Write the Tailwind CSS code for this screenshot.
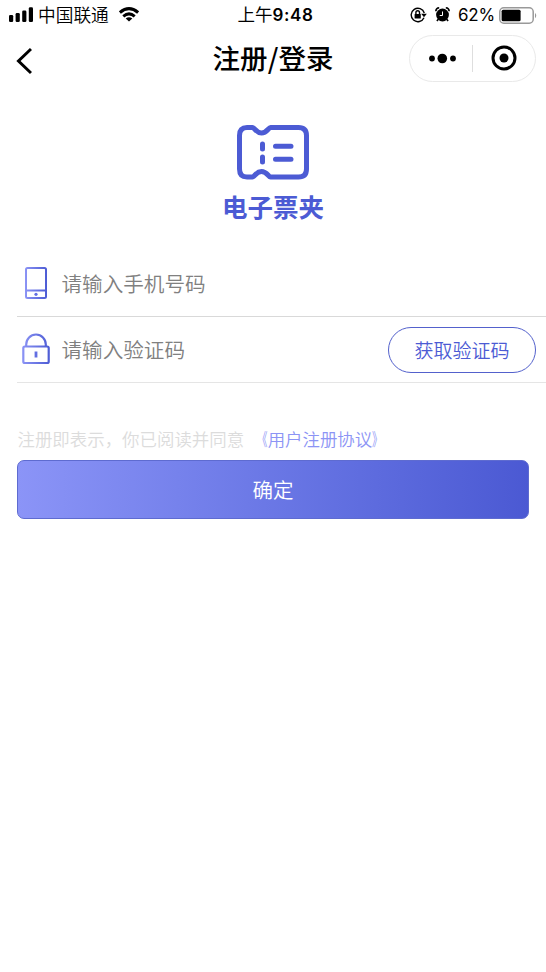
<!DOCTYPE html>
<html lang="zh-CN">
<head>
<meta charset="utf-8">
<title>注册/登录</title>
<script src="https://cdn.jsdelivr.net/npm/@tailwindcss/browser@4"></script>
</head>
<body class="bg-white">
<div class="w-[546px] h-[972px] overflow-hidden bg-white text-black font-['Noto_Sans_CJK_SC',sans-serif]">
  <!-- status bar -->
  <header class="grid grid-cols-[1fr_auto_1fr] items-center h-[30px] pl-[9px] pr-[8px] leading-[28px] whitespace-nowrap">
    <div class="flex items-center">
      <svg class="w-[24px] h-[16px] -mt-px" viewBox="0 0 24 16"><rect x="0" y="8" width="4.2" height="7" rx="1.3"/><rect x="6.6" y="6" width="4.2" height="9" rx="1.3"/><rect x="13.2" y="3.5" width="4.2" height="11.5" rx="1.3"/><rect x="19.8" y="0.2" width="4.2" height="14.8" rx="1.3"/></svg>
      <span class="ml-[5px] -mt-[2px] text-[17.7px] font-[350]">中国联通</span>
      <svg class="ml-[10px] w-[20px] h-[15px] -mt-[2px]" viewBox="0 0 20 15" fill="none" stroke="#000" stroke-width="3"><path d="M.9 5.5Q10-2.2 19.1 5.5"/><path d="M4.3 9.3Q10 4.4 15.7 9.3"/><path d="M10 14.6 6.7 11.5Q10 9.1 13.3 11.5Z" fill="#000" stroke="none"/></svg>
    </div>
    <div class="pl-[4px] -mt-px text-[17.5px]">上午<span class="font-['Inter',sans-serif] font-semibold text-[17px] tracking-[0.6px]">9:48</span></div>
    <div class="flex items-center justify-end">
      <svg class="w-[17px] h-[16px] -mt-px" viewBox="0 0 17 16" fill="none" stroke="#000" stroke-width="1.4"><path d="M14 10.7A6.7 6.7 0 1 1 14.3 6"/><path d="M11.2 6.8h5.6L14 10.3Z" fill="#000" stroke="none"/><rect x="4.6" y="7" width="6.2" height="4.5" rx=".5" fill="#000" stroke="none"/><path d="M5.9 7V5.6a1.8 1.8 0 0 1 3.6 0V7"/></svg>
      <svg class="ml-[8px] w-[15px] h-[15px] -mt-px" viewBox="0 0 15 15"><circle cx="7.5" cy="8" r="6.4"/><path d="M.8 4.2Q1 1 4.2.8M14.2 4.2Q14 1 10.8.8M3.3 12.2 1.9 14M11.7 12.2 13.1 14" fill="none" stroke="#000" stroke-width="1.6"/><path d="M7.5 4.5v4H4.7" fill="none" stroke="#fff" stroke-width="1"/></svg>
      <span class="ml-[8px] font-['Inter',sans-serif] text-[17px] tracking-[-0.2px]">62%</span>
      <svg class="ml-[4px] w-[39px] h-[17px]" viewBox="0 0 39 17"><rect x=".8" y=".8" width="33.4" height="15.4" rx="4" fill="none" stroke="#999" stroke-width="1.5"/><rect x="2.6" y="2.8" width="19" height="11.4" rx="1.5"/><path d="M36 5.7q2.5 2.8 0 5.6Z" fill="#999"/></svg>
    </div>
  </header>
  <!-- navigation bar -->
  <nav class="grid grid-cols-[1fr_auto_1fr] items-center h-[57px] px-[10px]">
    <svg class="w-[16px] h-[28px] ml-[6px] mt-[4px]" viewBox="0 0 16 28" fill="none" stroke="#000" stroke-width="3"><path d="M15 2 2.5 14 15 26"/></svg>
    <h1 class="text-[27.5px] leading-[56px] font-medium -mt-[3px]">注册<span class="px-[0.2px]">/</span>登录</h1>
    <div class="justify-self-end flex items-center w-[127px] h-[47px] -mt-px rounded-full border border-[#e9e9e9]">
      <svg class="w-[62px] h-[28px]" viewBox="0 0 62 28"><circle cx="22" cy="14.5" r="2.9"/><circle cx="32.3" cy="14.5" r="4.8"/><circle cx="43" cy="14.5" r="2.9"/></svg>
      <span class="w-px h-[27px] bg-[#dedede]"></span>
      <svg class="w-[61px] h-[28px]" viewBox="0 0 61 28"><circle cx="31" cy="14" r="11" fill="none" stroke="#000" stroke-width="3"/><circle cx="31" cy="14" r="4.5"/></svg>
    </div>
  </nav>
  <!-- brand -->
  <section class="flex flex-col items-center h-[163px] pt-[37px] text-[#4c5bd4]">
    <svg class="w-[74px] h-[57px]" viewBox="0 0 74 57" fill="none" stroke="currentColor" stroke-width="5" stroke-linecap="round" stroke-linejoin="round"><path d="M11 3.5H16.5C18.5 3.5 20 9 25.5 9S32.5 3.5 34.5 3.5H62.5Q70.5 3.5 70.5 11.5V45Q70.5 53 62.5 53H34.5C32.5 53 31 47.5 25.5 47.5S18.5 53 16.5 53H11Q3.500 53 3.500 45V11.500Q3.500 3.500 11 3.500Z"/><path d="M26.500 20v5M26.500 33v5M39.500 22.300H55M39.500 35.300H55"/></svg>
    <div class="text-[25.5px] leading-[50px] font-bold">电子票夹</div>
  </section>
  <!-- form -->
  <form>
    <label class="flex items-center h-[67px] ml-[17px] pl-[5px] border-b border-[#d9d9d9]">
      <svg class="w-[28px] h-[34px]" viewBox="0 0 28 34" fill="none" stroke="url(#phone)" stroke-width="2"><defs><linearGradient id="phone" gradientUnits="userSpaceOnUse" x1="3" y1="0" x2="25" y2="0"><stop stop-color="#8c94f5"/><stop offset="1" stop-color="#4c5bd4"/></linearGradient></defs><rect x="4" y="2" width="20" height="30" rx="1.5"/><path d="M4 24.5H24"/><circle cx="14" cy="28.3" r="1.6" fill="#626ee2" stroke="none"/></svg>
      <span class="ml-[11.5px] text-[20.6px] leading-[66px] font-[350] text-[#808080]">请输入手机号码</span>
    </label>
    <div class="flex items-center h-[66px] ml-[17px] pl-[5px] pr-[10px] border-b border-[#e5e5e5]">
      <svg class="w-[28px] h-[34px] -mt-px" viewBox="0 0 28 34" fill="none" stroke="url(#lock)" stroke-width="2.2"><defs><linearGradient id="lock" gradientUnits="userSpaceOnUse" x1="0" y1="0" x2="28" y2="0"><stop stop-color="#8c94f5"/><stop offset="1" stop-color="#4c5bd4"/></linearGradient></defs><rect x="1.3" y="14.5" width="25.4" height="16.5" rx="1.5"/><path d="M4.2 14.5V12.500a9.800 10 0 0 1 19.600 0V14.500"/><path d="M14 19.500v6" stroke="#626ee2" stroke-width="2.800"/></svg>
      <span class="ml-[11.5px] -mt-[2px] text-[20.6px] leading-[64px] font-[350] text-[#808080]">请输入验证码</span>
      <button type="button" class="ml-auto w-[148px] h-[46px] rounded-full border border-[#5361cc] text-[19px] leading-[42px] font-[350] text-[#4c5bd4]">获取验证码</button>
    </div>
    <p class="flex mt-[42px] ml-[17.5px] h-[35px] text-[17.45px] leading-[28px] font-[350] text-[#dcdcdc] whitespace-nowrap">注册即表示，你已阅读并同意<a class="flex ml-[6px] text-[#8c94f5]"><span class="inline-block origin-right scale-x-[0.6]">《</span>用户注册协议<span class="inline-block origin-left scale-x-[0.6]">》</span></a></p>
    <button type="button" class="block ml-[17px] w-[512px] h-[59px] rounded-[7px] border border-[#5e6bd0] bg-linear-to-r from-[#8b94f7] to-[#4b59d3] text-[20.5px] leading-[54px] font-[350] text-white"><span class="block -mt-[2px]">确定</span></button>
  </form>
</div>
</body>
</html>
